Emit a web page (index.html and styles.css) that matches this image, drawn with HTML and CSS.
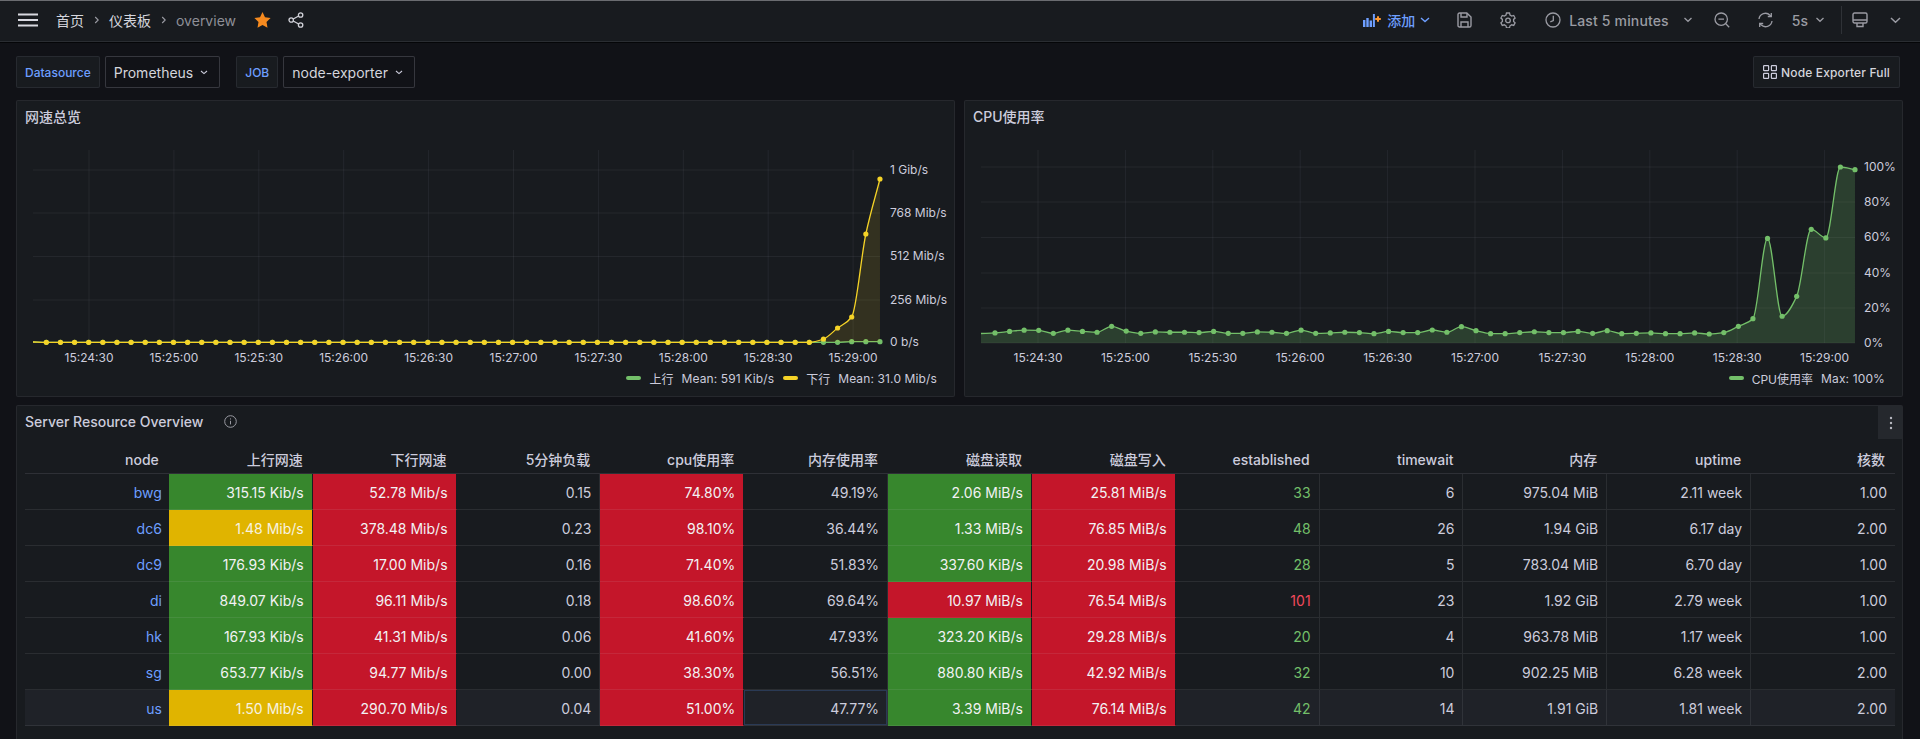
FILE: index.html
```html
<!DOCTYPE html>
<html lang="zh">
<head>
<meta charset="utf-8">
<title>overview</title>
<link rel="stylesheet" href="styles.css">
</head>
<body>
<header class="topbar">
  <svg class="burger" width="20" height="14" viewBox="0 0 20 14"><path d="M0 1.5h20M0 7h20M0 12.5h20" stroke="#d8d9e0" stroke-width="1.8" fill="none"/></svg>
  <nav class="crumbs">
    <span>首页</span><svg class="sep-chev" width="6" height="8" viewBox="0 0 6 8"><path d="M1.2 1l3 3-3 3" stroke="#9a9ba3" stroke-width="1.1" fill="none"/></svg>
    <span>仪表板</span><svg class="sep-chev" width="6" height="8" viewBox="0 0 6 8"><path d="M1.2 1l3 3-3 3" stroke="#9a9ba3" stroke-width="1.1" fill="none"/></svg>
    <span class="crumb-last">overview</span>
  </nav>
  <svg class="star" width="17" height="16" viewBox="0 0 17 16"><path d="M8.5 0l2.5 5.2 5.6.8-4.1 4 1 5.8-5-2.8-5 2.8 1-5.8L.4 6 6 5.2z" fill="#f58a1f"/></svg>
  <svg class="share" width="16" height="16" viewBox="0 0 16 16" fill="none" stroke="#d0d1d8" stroke-width="1.3"><circle cx="12.6" cy="3" r="2.2"/><circle cx="12.6" cy="13" r="2.2"/><circle cx="3.2" cy="8" r="2.2"/><path d="M5.2 7l5.5-3M5.2 9l5.5 3"/></svg>
  <div class="tools">
    <svg class="i-add" width="18" height="14" viewBox="0 0 18 14"><path d="M0 7h2.4v7H0zM3.3 5h2.4v9H3.3zM6.6 7.5h2.4V14H6.6zM9.9 1h2v13h-2z" fill="#6e9fff"/><path d="M12.2 6h5.6M15 3.2v5.6" stroke="#ff9830" stroke-width="2"/></svg>
    <span class="add-text">添加</span>
    <svg class="chev blue" width="10" height="6" viewBox="0 0 10 6"><path d="M1 1l4 3.6L9 1" fill="none" stroke="#6e9fff" stroke-width="1.4"/></svg>
    <svg class="i-save" width="15" height="16" viewBox="0 0 15 16" fill="none" stroke="#9a9ba3" stroke-width="1.4"><path d="M1 2.6C1 1.6 1.6 1 2.6 1h7.2L14 5v8.4c0 1-.6 1.6-1.6 1.6H2.6c-1 0-1.6-.6-1.6-1.6z"/><path d="M4 1v4h6V1M4 15v-5h7v5"/></svg>
    <svg class="i-gear" width="16" height="16" viewBox="0 0 16 16" fill="none" stroke="#9a9ba3" stroke-width="1.3"><path d="M6.5 1h3l.5 2 1.7 1 2-.6 1.4 2.6-1.5 1.4v2l1.5 1.4-1.4 2.6-2-.6-1.7 1-.5 2h-3l-.5-2-1.7-1-2 .6L.9 10.800l1.500-1.400v-2L.9 6l1.400-2.600 2 .6L6 3z"/><circle cx="8" cy="8.400" r="2.300"/></svg>
    <svg class="i-clock" width="16" height="16" viewBox="0 0 16 16" fill="none" stroke="#9a9ba3" stroke-width="1.3"><circle cx="8" cy="8" r="7"/><path d="M8.300 3.800V8.600L5.300 9.800"/></svg>
    <span class="range">Last 5 minutes</span>
    <svg class="chev c-range" width="10" height="6" viewBox="0 0 10 6"><path d="M1.500 1l3.500 3.300L8.500 1" fill="none" stroke="#9a9ba3" stroke-width="1.300"/></svg>
    <svg class="i-zoom" width="16" height="16" viewBox="0 0 16 16" fill="none" stroke="#9a9ba3" stroke-width="1.300"><circle cx="7.200" cy="7.200" r="6.200"/><path d="M4.400 7.200h5.600M11.800 11.800l3.400 3.400"/></svg>
    <svg class="i-sync" width="15" height="16" viewBox="0 0 15 16" fill="none" stroke="#9a9ba3" stroke-width="1.300"><path d="M1 7a6.500 6.500 0 0 1 11-3.800l1 1.100M14 9a6.500 6.500 0 0 1-11 3.800l-1-1.100"/><path d="M13.300 1v3.500H9.800M1.700 15v-3.500h3.500"/></svg>
    <span class="interval">5s</span>
    <svg class="chev c-int" width="10" height="6" viewBox="0 0 10 6"><path d="M1.500 1l3.500 3.300L8.500 1" fill="none" stroke="#9a9ba3" stroke-width="1.300"/></svg>
    <span class="vsep"></span>
    <svg class="i-tv" width="16" height="16" viewBox="0 0 16 16" fill="none" stroke="#9a9ba3" stroke-width="1.400"><rect x="1" y="1" width="14" height="10" rx="1.500"/><path d="M1 8h14M5 11v3.500h6V11"/></svg>
    <svg class="chev c-tv" width="11" height="7" viewBox="0 0 11 7"><path d="M1 1l4.500 4.200L10 1" fill="none" stroke="#9a9ba3" stroke-width="1.500"/></svg>
  </div>
</header>

<main class="main">
  <section class="vars">
    <span class="var-label">Datasource</span>
    <span class="var-select">Prometheus<svg class="sel-chev" width="8" height="5" viewBox="0 0 8 5"><path d="M1 1l3 2.600L7 1" fill="none" stroke="#ccccdc" stroke-width="1.100"/></svg></span>
    <span class="var-label second">JOB</span>
    <span class="var-select">node-exporter<svg class="sel-chev" width="8" height="5" viewBox="0 0 8 5"><path d="M1 1l3 2.600L7 1" fill="none" stroke="#ccccdc" stroke-width="1.100"/></svg></span>
    <a class="link-btn"><svg width="14" height="14" viewBox="0 0 14 14" fill="none" stroke="#ccccdc" stroke-width="1.200"><rect x=".6" y=".6" width="5" height="5" rx=".6"/><rect x="8.400" y=".6" width="5" height="5" rx=".6"/><rect x=".6" y="8.400" width="5" height="5" rx=".6"/><rect x="8.400" y="8.400" width="5" height="5" rx=".6"/></svg>Node Exporter Full</a>
  </section>

  <section class="charts">
    <article class="panel chart-panel">
      <h2 class="panel-title">网速总览</h2>
      <svg id="net" class="plot" width="937" height="233" viewBox="17 135 937 233"></svg>
      <div class="legend">
        <span class="swatch green"></span><span>上行</span><span class="stat">Mean: 591 Kib/s</span>
        <span class="swatch yellow next"></span><span>下行</span><span class="stat">Mean: 31.0 Mib/s</span>
      </div>
    </article>
    <article class="panel chart-panel">
      <h2 class="panel-title">CPU使用率</h2>
      <svg id="cpu" class="plot" width="937" height="233" viewBox="965 135 937 233"></svg>
      <div class="legend">
        <span class="swatch green"></span><span>CPU使用率</span><span class="stat">Max: 100%</span>
      </div>
    </article>
  </section>

  <section class="panel table-panel">
    <div class="table-head">
      <h2 class="panel-title inline">Server Resource Overview</h2>
      <svg class="info" width="13" height="13" viewBox="0 0 13 13" fill="none" stroke="#9a9ba3" stroke-width="1"><circle cx="6.500" cy="6.500" r="5.800"/><path d="M6.500 5.800v3.600M6.500 3.400v1.100"/></svg>
      <span class="more"><svg width="4" height="14" viewBox="0 0 4 14" fill="#b8b9c0"><circle cx="2" cy="2" r="1.200"/><circle cx="2" cy="7" r="1.200"/><circle cx="2" cy="12" r="1.200"/></svg></span>
    </div>
    <table class="grid">
      <thead>
        <tr><th>node</th><th>上行网速</th><th>下行网速</th><th>5分钟负载</th><th>cpu使用率</th><th>内存使用率</th><th>磁盘读取</th><th>磁盘写入</th><th>established</th><th>timewait</th><th>内存</th><th>uptime</th><th>核数</th></tr>
      </thead>
      <tbody>
        <tr><td class="node">bwg</td><td class="g">315.15 Kib/s</td><td class="r">52.78 Mib/s</td><td>0.15</td><td class="r">74.80%</td><td>49.19%</td><td class="g">2.06 MiB/s</td><td class="r">25.81 MiB/s</td><td class="ok">33</td><td>6</td><td>975.04 MiB</td><td>2.11 week</td><td>1.00</td></tr>
        <tr><td class="node">dc6</td><td class="y">1.48 Mib/s</td><td class="r">378.48 Mib/s</td><td>0.23</td><td class="r">98.10%</td><td>36.44%</td><td class="g">1.33 MiB/s</td><td class="r">76.85 MiB/s</td><td class="ok">48</td><td>26</td><td>1.94 GiB</td><td>6.17 day</td><td>2.00</td></tr>
        <tr><td class="node">dc9</td><td class="g">176.93 Kib/s</td><td class="r">17.00 Mib/s</td><td>0.16</td><td class="r">71.40%</td><td>51.83%</td><td class="g">337.60 KiB/s</td><td class="r">20.98 MiB/s</td><td class="ok">28</td><td>5</td><td>783.04 MiB</td><td>6.70 day</td><td>1.00</td></tr>
        <tr><td class="node">di</td><td class="g">849.07 Kib/s</td><td class="r">96.11 Mib/s</td><td>0.18</td><td class="r">98.60%</td><td>69.64%</td><td class="r">10.97 MiB/s</td><td class="r">76.54 MiB/s</td><td class="bad">101</td><td>23</td><td>1.92 GiB</td><td>2.79 week</td><td>1.00</td></tr>
        <tr><td class="node">hk</td><td class="g">167.93 Kib/s</td><td class="r">41.31 Mib/s</td><td>0.06</td><td class="r">41.60%</td><td>47.93%</td><td class="g">323.20 KiB/s</td><td class="r">29.28 MiB/s</td><td class="ok">20</td><td>4</td><td>963.78 MiB</td><td>1.17 week</td><td>1.00</td></tr>
        <tr><td class="node">sg</td><td class="g">653.77 Kib/s</td><td class="r">94.77 Mib/s</td><td>0.00</td><td class="r">38.30%</td><td>56.51%</td><td class="g">880.80 KiB/s</td><td class="r">42.92 MiB/s</td><td class="ok">32</td><td>10</td><td>902.25 MiB</td><td>6.28 week</td><td>2.00</td></tr>
        <tr class="hover"><td class="node">us</td><td class="y">1.50 Mib/s</td><td class="r">290.70 Mib/s</td><td>0.04</td><td class="r">51.00%</td><td class="focus">47.77%</td><td class="g">3.39 MiB/s</td><td class="r">76.14 MiB/s</td><td class="ok">42</td><td>14</td><td>1.91 GiB</td><td>1.81 week</td><td>2.00</td></tr>
      </tbody>
    </table>
  </section>
</main>
<script src="charts.js"></script>
</body>
</html>
```
FILE: styles.css
```css
* { box-sizing: border-box; }
html, body { margin: 0; height: 739px; overflow: hidden; }
body {
  background: #111217;
  color: #ccccdc;
  font-family: Inter, "Noto Sans CJK SC", sans-serif;
  font-size: 14px;
}

/* top bar */
.topbar {
  height: 42px;
  display: flex;
  align-items: center;
  background: #181b1f;
  border-top: 1px solid #6a6c70;
  border-bottom: 1px solid #2a2d32;
  padding: 0 19px 2px 18px;
  box-shadow: 0 1px 0 #050608;
}
.burger { flex: none; }
.crumbs { display: flex; align-items: center; margin-left: 18px; color: #d4d5dc; font-size: 14px; }
.sep-chev { margin: 0 9.5px; }
.crumb-last { color: #8e8f97; }
.star { margin-left: 18px; }
.share { margin-left: 17px; }
.tools { margin-left: auto; display: flex; align-items: center; color: #9a9ba3; }
.add-text { margin-left: 6px; color: #6e9fff; font-weight: 500; }
.chev.blue { margin-left: 5px; }
.i-save { margin-left: 27px; }
.i-gear { margin-left: 28px; }
.i-clock { margin-left: 29px; }
.range { margin-left: 8px; font-weight: 500; letter-spacing: .15px; }
.c-range { margin-left: 14px; }
.i-zoom { margin-left: 21px; }
.i-sync { margin-left: 28px; }
.interval { margin-left: 19px; font-weight: 500; }
.c-int { margin-left: 7px; }
.vsep { width: 1px; height: 28px; background: #2f3237; margin-left: 16px; }
.i-tv { margin-left: 10px; }
.c-tv { margin-left: 22px; }

/* main */
.main { padding: 14px 17px 0 16px; }
.vars { display: flex; align-items: center; height: 32px; padding-right: 3px; }
.var-label {
  height: 32px;
  display: flex;
  align-items: center;
  padding: 0 8px;
  background: #181b1f;
  border: 1px solid rgba(204, 204, 220, .09);
  border-radius: 2px;
  color: #6e9fff;
  font-size: 12px;
  font-weight: 500;
}
.var-label.second { margin-left: 16px; }
.var-select {
  height: 32px;
  display: flex;
  align-items: center;
  margin-left: 5px;
  padding: 0 11px 0 8px;
  background: #111217;
  border: 1px solid rgba(204, 204, 220, .2);
  border-radius: 2px;
  color: #d4d5dc;
}
.sel-chev { margin-left: 7px; }
.link-btn {
  margin-left: auto;
  height: 32px;
  display: flex;
  align-items: center;
  gap: 4px;
  padding: 0 9px;
  background: #181b1f;
  border: 1px solid rgba(204, 204, 220, .09);
  border-radius: 2px;
  font-size: 12px;
  font-weight: 500;
  letter-spacing: .15px;
  color: #d4d5dc;
}

/* panels */
.panel {
  background: #181b1f;
  border: 1px solid rgba(204, 204, 220, .08);
  border-radius: 2px;
}
.panel-title {
  margin: 0;
  height: 34px;
  padding: 0 0 2px 8px;
  font-size: 14px;
  font-weight: 500;
  line-height: 32px;
  color: #ccccdc;
}
.charts { display: grid; grid-template-columns: 939px 939px; gap: 9px; margin-top: 12px; }
.chart-panel { height: 297px; }
.plot { display: block; }
.plot text { font: 12px Inter, "Noto Sans CJK SC", sans-serif; fill: #ccccdc; }
.legend {
  display: flex;
  justify-content: flex-end;
  align-items: center;
  height: 20px;
  padding-right: 17px;
  font-size: 12px;
}
.stat { margin-left: 8px; letter-spacing: .13px; }
.swatch { width: 15px; height: 4px; border-radius: 2px; margin-right: 8px; }
.swatch.green { background: #73bf69; }
.swatch.yellow { background: #f5d327; }
.swatch.next { margin-left: 9px; }

/* table panel */
.table-panel { margin-top: 8px; height: 340px; padding: 0 7px 0 8px; position: relative; }
.table-head { display: flex; align-items: center; height: 33px; }
.panel-title.inline { padding-left: 0; }
.info { margin-left: 21px; margin-bottom: 2px; }
.more {
  position: absolute;
  top: 0;
  right: 0;
  width: 24px;
  height: 33px;
  display: flex;
  align-items: center;
  justify-content: center;
  padding-left: 2px;
  background: #25282d;
}
.grid { width: 1870px; table-layout: fixed; border-collapse: separate; border-spacing: 0; }
.grid th {
  height: 35px;
  padding: 6px 10px 0 0;
  text-align: right;
  font-size: 14px;
  font-weight: 500;
  color: #ccccdc;
  border-bottom: 1px solid rgba(204, 204, 220, .12);
}
.grid td {
  height: 36px;
  padding: 1px 8px 0 0;
  text-align: right;
  font-size: 14px;
  color: #ccccdc;
  border-right: 1px solid rgba(204, 204, 220, .1);
  border-bottom: 1px solid rgba(204, 204, 220, .1);
}
.grid td:last-child { border-right: 0; }
.grid td.node { color: #6e9fff; border-right: 0; padding-right: 7px; }
.grid td.g { background: #37872d; color: #f2f2f4; border-right: 1px solid #181b1f; }
.grid td.r { background: #c4162a; color: #f2f2f4; border-right: 1px solid #181b1f; }
.grid td.y { background: #e0b400; color: #f7f3e0; border-right: 1px solid #181b1f; }
.grid td.ok { color: #73bf69; }
.grid td.bad { color: #f2495c; }
.grid tr.hover td { background-color: #1f2228; }
.grid tr.hover td.g { background: #37872d; }
.grid tr.hover td.r { background: #c4162a; }
.grid tr.hover td.y { background: #e0b400; }
.grid td.focus { box-shadow: inset 0 0 0 1px #2a3a55; }
```
FILE: charts.js
```js
/* monotone cubic: no overshoot, flat tangents at local extremes */
function spline(pts) {
  var n = pts.length, m = [], i;
  for (i = 0; i < n; i++) {
    if (i === 0 || i === n - 1) { m.push(null); continue; }
    var d0 = (pts[i][1] - pts[i - 1][1]) / (pts[i][0] - pts[i - 1][0]);
    var d1 = (pts[i + 1][1] - pts[i][1]) / (pts[i + 1][0] - pts[i][0]);
    m.push(d0 * d1 <= 0 ? 0 : 2 * d0 * d1 / (d0 + d1));
  }
  m[0] = (pts[1][1] - pts[0][1]) / (pts[1][0] - pts[0][0]);
  m[n - 1] = (pts[n - 1][1] - pts[n - 2][1]) / (pts[n - 1][0] - pts[n - 2][0]);
  var d = 'M' + pts[0][0] + ' ' + pts[0][1];
  for (i = 0; i < n - 1; i++) {
    var h = (pts[i + 1][0] - pts[i][0]) / 3;
    d += 'C' + (pts[i][0] + h) + ' ' + (pts[i][1] + m[i] * h) + ' ' +
      (pts[i + 1][0] - h) + ' ' + (pts[i + 1][1] - m[i + 1] * h) + ' ' +
      pts[i + 1][0] + ' ' + pts[i + 1][1];
  }
  return d;
}

function series(start, pts, base, color, fillOpacity) {
  var all = [start].concat(pts);
  var line = spline(all);
  var last = all[all.length - 1];
  var out = '<path d="' + line + 'L' + last[0] + ' ' + base + 'L' + start[0] + ' ' + base + 'Z" fill="' + color + '" fill-opacity="' + fillOpacity + '"/>';
  out += '<path d="' + line + '" fill="none" stroke="' + color + '" stroke-width="1.3"/>';
  pts.forEach(function (p) {
    out += '<circle cx="' + p[0] + '" cy="' + p[1] + '" r="2.600" fill="' + color + '"/>';
  });
  return out;
}

function frame(c) {
  var s = '', grid = 'rgba(204,204,220,.07)';
  c.yLines.forEach(function (l) {
    s += '<line x1="' + c.left + '" x2="' + c.right + '" y1="' + l[0] + '" y2="' + l[0] + '" stroke="' + grid + '"/>';
    s += '<text x="' + c.labelX + '" y="' + (l[0] + 3.5) + '">' + l[1] + '</text>';
  });
  c.times.forEach(function (t, i) {
    var x = c.tx + c.tStep * i;
    s += '<line x1="' + x + '" x2="' + x + '" y1="150" y2="' + c.base + '" stroke="' + grid + '"/>';
    s += '<text x="' + x + '" y="362" text-anchor="middle">' + t + '</text>';
  });
  return s;
}

var times = ['15:24:30', '15:25:00', '15:25:30', '15:26:00', '15:26:30', '15:27:00', '15:27:30', '15:28:00', '15:28:30', '15:29:00'];

/* network chart */
(function () {
  var yellow = [], green = [], i, x;
  var tail = { 55: 339, 56: 328, 57: 317, 58: 234, 59: 179 };
  for (i = 0; i < 60; i++) {
    x = 46.3 + 14.13 * i;
    yellow.push([x, tail[i] || 342.3]);
    green.push([x, i > 56 ? 341.7 : 342.3]);
  }
  var cfg = {
    left: 33, right: 880, base: 342, labelX: 890, tx: 89, tStep: 84.9, times: times,
    yLines: [[170, '1 Gib/s'], [213, '768 Mib/s'], [256.5, '512 Mib/s'], [300, '256 Mib/s'], [342, '0 b/s']]
  };
  document.getElementById('net').innerHTML = frame(cfg) +
    series([33, 342], green, 342, '#73bf69', 0.1) +
    series([33, 342], yellow, 342, '#f5d327', 0.12);
})();

/* cpu chart */
(function () {
  var v = [5.7, 6.6, 7.3, 7.2, 5.5, 7.3, 6.6, 6.1, 9.5, 6.8, 5.5, 6.3, 6.1, 6.1, 5.9, 6.6, 5.5, 5.5, 6.3, 6.1, 5.5, 7.3, 5.5, 5.7,
    6.1, 5.9, 5.3, 6.6, 5.9, 5.9, 7.4, 6.1, 9.3, 7.0, 5.3, 5.3, 5.9, 6.4, 5.9, 5.9, 6.6, 5.5, 7.0, 5.3, 5.5, 5.7,
    5.3, 5.3, 5.7, 5.1, 5.9, 9.5, 13.8, 59.4, 15.2, 26.5, 64.6, 59.7, 100, 98.5];
  var pts = v.map(function (p, i) { return [995 + 14.576 * i, 343 - 1.76 * p]; });
  var cfg = {
    left: 981, right: 1855, base: 343, labelX: 1864, tx: 1038, tStep: 87.4, times: times,
    yLines: [[167, '100%'], [202, '80%'], [237.5, '60%'], [273, '40%'], [308, '20%'], [343, '0%']]
  };
  document.getElementById('cpu').innerHTML = frame(cfg) +
    series([981, 343 - 1.76 * 5.4], pts, 343, '#73bf69', 0.22);
})();
```
